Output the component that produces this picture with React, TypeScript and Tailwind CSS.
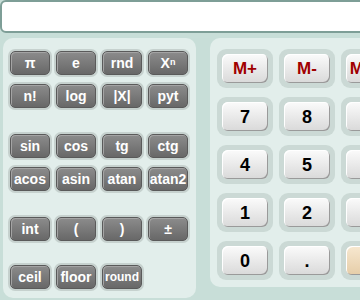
import React from "react";

const font = { fontFamily: '"Liberation Sans", Arial, sans-serif' };

function FnKey({ label, small }: { label: React.ReactNode; small?: boolean }) {
  return (
    <button
      className={`w-[40px] h-[24px] rounded-[5px] flex items-center justify-center text-white font-bold leading-none bg-gradient-to-b from-[#8c8c8c] to-[#686868] border border-[#5a5a5a] shadow-[0_0_0_2px_#c6d1ce,inset_1px_1px_0_#a4a4a4] ${small ? "text-[12px]" : "text-[14px]"}`}
    >
      {label}
    </button>
  );
}

function NumKey({ label, red, peach }: { label?: string; red?: boolean; peach?: boolean }) {
  return (
    <div className="w-[56px] h-[39px] rounded-[9px] bg-[#cbd9d5] p-[5px]">
      <button
        className={`w-full h-full rounded-[6px] flex items-center justify-center font-bold leading-none whitespace-nowrap overflow-hidden shadow-[inset_1px_1px_0_#ffffff,inset_-1px_-1px_0_#9a9a9a] ${
          peach ? "bg-gradient-to-b from-[#f7e8d0] to-[#e6cda8]" : "bg-gradient-to-b from-[#fbfbfb] to-[#d9d9d9]"
        } ${red ? "text-[#a00000] text-[17px]" : "text-black text-[18px]"}`}
      >
        {label}
      </button>
    </div>
  );
}

export default function App() {
  return (
    <div className="w-[360px] h-[300px] overflow-hidden bg-[#c8ded8]" style={font}>
      <input
        className="block w-[420px] h-[33px] bg-white border-2 border-[#7e9e97] rounded-[6px] outline-none"
        readOnly
      />
      <div className="flex items-start gap-[14px] pl-[3px] mt-[5px]">
        <div className="w-[193px] h-[260px] shrink-0 rounded-[10px] bg-[#e2eeeb] pl-[7px] pt-[13px]">
          <div className="grid grid-cols-[repeat(4,40px)] gap-x-[6px] gap-y-[9px]">
            <FnKey label="π" />
            <FnKey label="e" />
            <FnKey label="rnd" />
            <FnKey
              label={
                <span>
                  X<sup className="text-[9px] relative -top-[3px]">n</sup>
                </span>
              }
            />
            <FnKey label="n!" />
            <FnKey label="log" />
            <FnKey label="|X|" />
            <FnKey label="pyt" />
          </div>
          <div className="grid grid-cols-[repeat(4,40px)] gap-x-[6px] gap-y-[9px] mt-[26px]">
            <FnKey label="sin" />
            <FnKey label="cos" />
            <FnKey label="tg" />
            <FnKey label="ctg" />
            <FnKey label="acos" />
            <FnKey label="asin" />
            <FnKey label="atan" />
            <FnKey label="atan2" />
          </div>
          <div className="grid grid-cols-[repeat(4,40px)] gap-x-[6px] mt-[26px]">
            <FnKey label="int" />
            <FnKey label="(" />
            <FnKey label=")" />
            <FnKey label="±" />
          </div>
          <div className="grid grid-cols-[repeat(4,40px)] gap-x-[6px] mt-[24px]">
            <FnKey label="ceil" />
            <FnKey label="floor" />
            <FnKey label="round" small />
          </div>
        </div>
        <div className="w-[260px] h-[249px] shrink-0 rounded-[10px] bg-[#e2eeeb] pl-[7px] pt-[11px]">
          <div className="grid grid-cols-[repeat(4,56px)] gap-x-[6px] gap-y-[9px]">
            <NumKey label="M+" red />
            <NumKey label="M-" red />
            <NumKey label="MRC" red />
            <NumKey label="C" red />
            <NumKey label="7" />
            <NumKey label="8" />
            <NumKey label="9" />
            <NumKey label="/" />
            <NumKey label="4" />
            <NumKey label="5" />
            <NumKey label="6" />
            <NumKey label="*" />
            <NumKey label="1" />
            <NumKey label="2" />
            <NumKey label="3" />
            <NumKey label="-" />
            <NumKey label="0" />
            <NumKey label="." />
            <NumKey label="=" peach />
            <NumKey label="+" />
          </div>
        </div>
      </div>
    </div>
  );
}
